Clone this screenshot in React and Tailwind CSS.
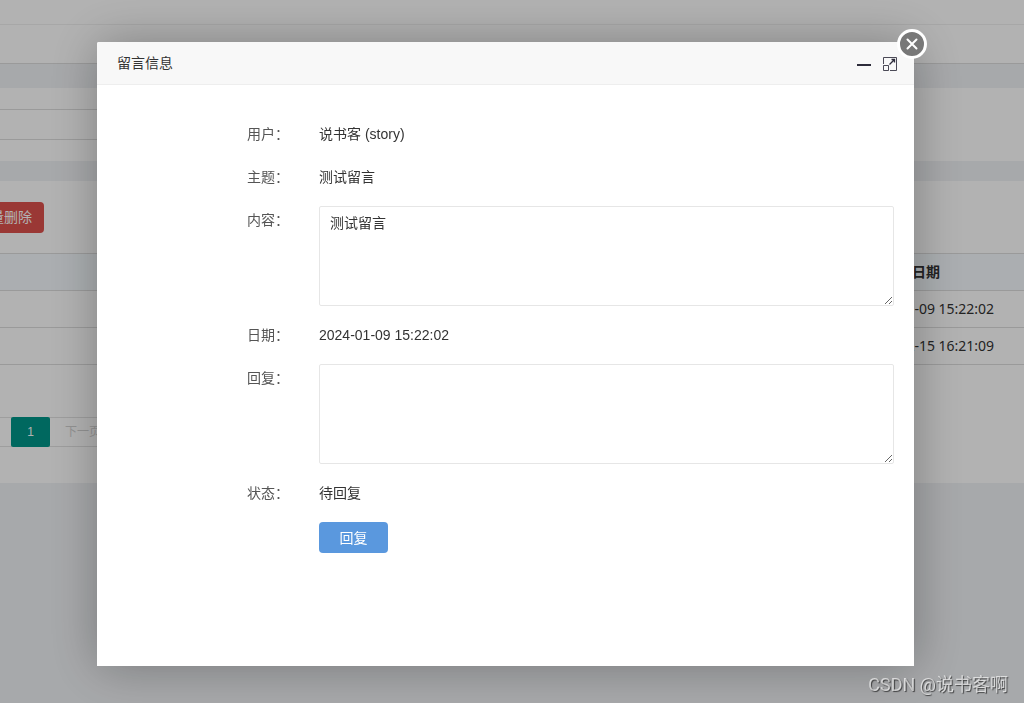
import React from "react";

const messages = [
  { id: 1, date: "2024-01-09 15:22:02" },
  { id: 2, date: "2023-12-15 16:21:09" },
];

function MessageList() {
  return (
    <div className="isolate min-h-screen overflow-hidden bg-[#f0f2f5] font-['Noto_Sans','Noto_Sans_CJK_SC',sans-serif] text-[#333]">
      <header className="h-6 bg-white shadow-sm"></header>
      <nav className="h-10 border-t border-b border-[#f0f0f0] border-b-[#ddd] bg-white"></nav>

      <section className="mt-6 bg-white pt-[21px] pb-[21px]">
        <input
          type="text"
          aria-label="关键字"
          className="-ml-2 block h-[31px] w-60 border border-[#ddd] px-2 text-sm"
        />
      </section>

      <section className="mt-5 bg-white pt-[21px] pb-9">
        <button
          type="button"
          className="-ml-9 block h-[31px] rounded bg-[#dd514c] px-3 pb-0.5 text-sm whitespace-nowrap text-white"
        >
          批量删除
        </button>

        <table className="mt-5 w-full table-fixed border-collapse text-sm">
          <thead>
            <tr className="h-[37px] border-y border-[#ddd] bg-[#f5fafe]">
              <th></th>
              <th className="w-[196px] text-center font-bold">日期</th>
            </tr>
          </thead>
          <tbody>
            {messages.map((item) => (
              <tr key={item.id} className="h-[37px] border-b border-[#ddd]">
                <td></td>
                <td className="pl-1 text-center whitespace-nowrap">
                  {item.date}
                </td>
              </tr>
            ))}
          </tbody>
        </table>

        <div className="mt-[52px] -ml-14 flex h-[30px] font-['Liberation_Sans','Noto_Sans_CJK_SC',sans-serif] text-xs">
          <button
            type="button"
            disabled
            className="-mr-px border border-[#e2e2e2] px-[15px] text-[#d2d2d2]"
          >
            上一页
          </button>
          <button
            type="button"
            className="z-1 w-[39px] rounded-xs bg-[#009688] text-white"
          >
            1
          </button>
          <button
            type="button"
            disabled
            className="-ml-px border border-[#e2e2e2] px-[15px] text-[#d2d2d2]"
          >
            下一页
          </button>
        </div>
      </section>
    </div>
  );
}

function Row({ label, htmlFor, children }) {
  return (
    <div className="grid grid-cols-[192px_1fr] gap-x-[30px]">
      <label htmlFor={htmlFor} className="text-right text-[#555]">
        {label}
      </label>
      {children}
    </div>
  );
}

function MessageDialog() {
  return (
    <div
      role="dialog"
      aria-labelledby="dialog-title"
      className="relative flex flex-1 flex-col rounded-t-xs bg-white shadow-[1px_1px_50px_rgba(0,0,0,0.3)]"
    >
      <div className="flex h-[43px] items-center justify-between rounded-t-xs border-b border-[#eee] bg-[#f8f8f8] pr-4 pl-5">
        <h2 id="dialog-title" className="text-sm text-[#333]">
          留言信息
        </h2>
        <div className="flex items-center gap-3 pt-0.5">
          <button type="button" aria-label="最小化">
            <svg className="h-4 w-[14px]" viewBox="0 0 14 16">
              <path d="M0 9h14" stroke="#2d2c3b" strokeWidth="2" />
            </svg>
          </button>
          <button type="button" aria-label="最大化">
            <svg
              className="h-4 w-[15px]"
              viewBox="0 0 15 16"
              fill="none"
              stroke="#2d2c3b"
            >
              <path d="M.5 8V1.5h13v13H7M.5 9.5h5v5h-5z" strokeOpacity="0.85" />
              <path d="M6.5 8.5l5-5M8.5 3.5h3v3" strokeWidth="1.3" />
            </svg>
          </button>
        </div>
      </div>

      <button
        type="button"
        aria-label="关闭"
        className="absolute -top-[13px] -right-[13px] flex size-[30px] items-center justify-center rounded-full border-3 border-white bg-[#787878]"
      >
        <svg
          className="size-3"
          viewBox="0 0 12 12"
          stroke="#fff"
          strokeWidth="2"
          strokeLinecap="round"
        >
          <path d="M1.5 1.5l9 9M10.5 1.5l-9 9" />
        </svg>
      </button>

      <form
        className="flex flex-col gap-[15px] pt-[35px] pr-5 pb-[113px] text-sm leading-7 text-[#333]"
        onSubmit={(e) => e.preventDefault()}
      >
        <Row label="用户：">
          <span>说书客 (story)</span>
        </Row>
        <Row label="主题：">
          <span>测试留言</span>
        </Row>
        <Row label="内容：" htmlFor="content">
          <textarea
            id="content"
            defaultValue="测试留言"
            className="block h-[100px] w-full rounded-xs border border-[#e6e6e6] px-2.5 py-[7px] leading-[18px]"
          />
        </Row>
        <Row label="日期：">
          <span>2024-01-09 15:22:02</span>
        </Row>
        <Row label="回复：" htmlFor="reply">
          <textarea
            id="reply"
            className="block h-[100px] w-full rounded-xs border border-[#e6e6e6] px-2.5 py-[7px] leading-[18px]"
          />
        </Row>
        <Row label="状态：">
          <span>待回复</span>
        </Row>
        <div className="pl-[222px]">
          <button
            type="submit"
            className="block h-[31px] w-[69px] rounded bg-[#5a98de] text-sm text-white"
          >
            回复
          </button>
        </div>
      </form>
    </div>
  );
}

export default function App() {
  return (
    <>
      <MessageList />
      <div className="fixed inset-0 flex bg-black/30 pt-[42px] pr-[110px] pb-[37px] pl-[97px] font-['Liberation_Sans','Noto_Sans_CJK_SC',sans-serif]">
        <MessageDialog />
      </div>
      <div className="fixed right-4 bottom-1.5 font-['Roboto','Noto_Sans_CJK_SC',sans-serif] text-lg leading-6 text-white/65 [text-shadow:1px_1px_1px_rgba(0,0,0,0.6)]">
        CSDN @说书客啊
      </div>
    </>
  );
}
